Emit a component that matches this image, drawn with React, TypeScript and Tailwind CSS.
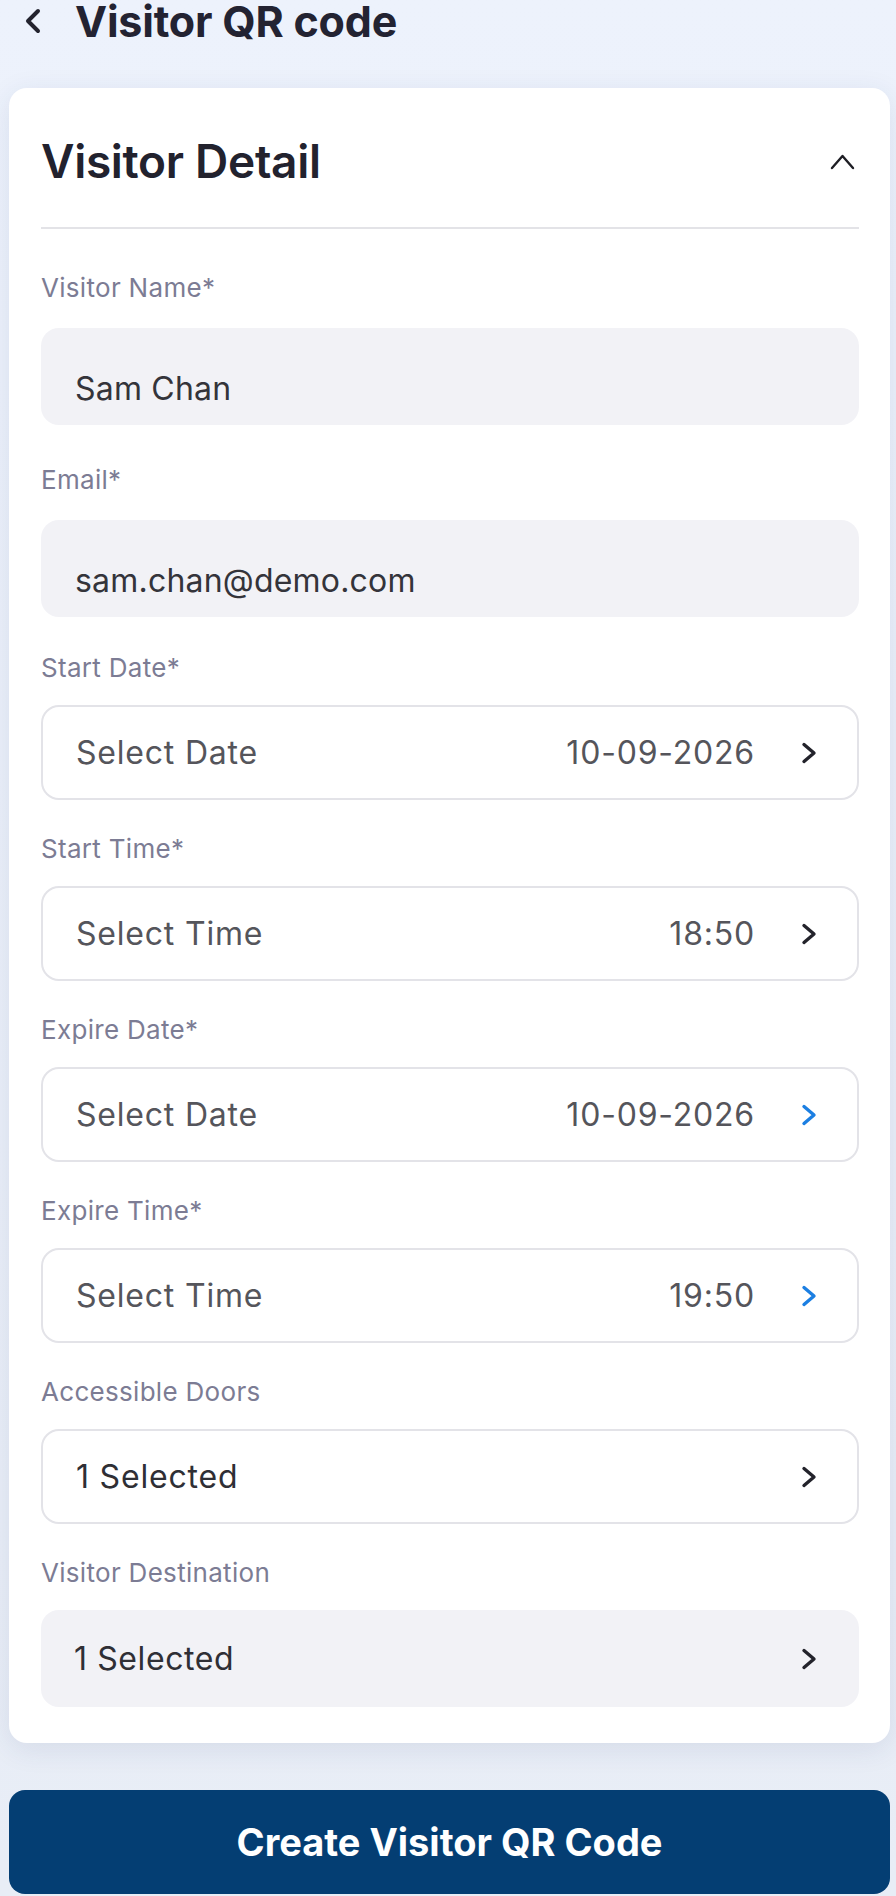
import React from "react"

type Chevron = "dark" | "blue"

function ChevronRight({ tone = "dark" }: { tone?: Chevron }) {
  return (
    <svg
      width="16"
      height="24"
      viewBox="0 0 16 24"
      fill="none"
      className={tone === "blue" ? "text-[#1c7fe2]" : "text-[#23232b]"}
    >
      <path
        d="M3 3.5 L13 12 L3 20.5"
        stroke="currentColor"
        strokeWidth="3.4"
        strokeLinecap="round"
        strokeLinejoin="round"
      />
    </svg>
  )
}

function Label({ children }: { children: React.ReactNode }) {
  return <p className="text-[26px] leading-[28px] tracking-[0.3px] text-[#7c7c94]">{children}</p>
}

// filled, read-only text input (text sits a little low, like the app)
function FilledField({ label, value, first }: { label: string; value: string; first?: boolean }) {
  return (
    <div className={first ? "mt-[45px]" : "mt-[41px]"}>
      <Label>{label}</Label>
      <div className="mt-[26px] flex h-[97px] items-center rounded-[18px] bg-[#f2f2f6] px-[34px] pt-[24px]">
        <span className="text-[32px] leading-none tracking-[0.2px] text-[#34343a]">{value}</span>
      </div>
    </div>
  )
}

// bordered picker row
function PickerField({
  label,
  placeholder,
  value,
  tone = "dark",
  dark,
  top = "mt-[35px]",
}: {
  label: string
  placeholder: string
  value?: string
  tone?: Chevron
  dark?: boolean
  top?: string
}) {
  return (
    <div className={top}>
      <Label>{label}</Label>
      <div className="mt-[23px] flex h-[95px] items-center rounded-[18px] border-2 border-[#e3e3e8] bg-white pl-[33px] pr-[40px]">
        <span
          className={`flex-1 text-[32px] leading-none tracking-[0.8px] ${dark ? "text-[#2f2f35]" : "text-[#55555b]"}`}
        >
          {placeholder}
        </span>
        {value && (
          <span className="mr-[46px] text-[32px] leading-none tracking-[0.8px] text-[#55555b]">{value}</span>
        )}
        <ChevronRight tone={tone} />
      </div>
    </div>
  )
}

export default function App() {
  return (
    <div
      className="min-h-[1896px] w-[896px] overflow-hidden bg-gradient-to-b from-[#edf2fc] to-[#e8edf6]"
      style={{ fontFamily: "Inter, 'Noto Sans', 'Liberation Sans', sans-serif" }}
    >
      {/* Top bar */}
      <div className="flex h-[42px] items-center">
        <div className="ml-[23px] flex w-[52px] items-center">
          <svg width="20" height="28" viewBox="0 0 20 28" fill="none" className="text-[#23232e]">
            <path
              d="M15 4 L5 14 L15 24"
              stroke="currentColor"
              strokeWidth="4"
              strokeLinecap="round"
              strokeLinejoin="round"
            />
          </svg>
        </div>
        <h1 className="text-[43px] font-bold leading-[42px] tracking-[-0.2px] text-[#232332]">Visitor QR code</h1>
      </div>

      {/* Card */}
      <div className="ml-[9px] mr-[6px] mt-[46px] rounded-[18px] bg-white pb-[36px] pl-[32px] pr-[31px] pt-[47px] shadow-[0_6px_28px_rgba(40,60,110,0.10)]">
        <div className="flex h-[52px] items-center justify-between">
          <h2 className="text-[46px] font-semibold leading-[52px] tracking-[-0.3px] text-[#22222e]">Visitor Detail</h2>
          <svg width="25" height="17" viewBox="0 0 25 17" fill="none" className="mr-[4px] text-[#1e1e24]">
            <path
              d="M2 15 L12.5 3 L23 15"
              stroke="currentColor"
              strokeWidth="2.4"
              strokeLinecap="round"
              strokeLinejoin="round"
            />
          </svg>
        </div>
        <div className="mt-[40px] h-[2px] bg-[#e3e3e7]" />

        <FilledField label="Visitor Name*" value="Sam Chan" first />
        <FilledField label="Email*" value="sam.chan@demo.com" />

        <PickerField label="Start Date*" placeholder="Select Date" value="10-09-2026" top="mt-[37px]" />
        <PickerField label="Start Time*" placeholder="Select Time" value="18:50" />
        <PickerField label="Expire Date*" placeholder="Select Date" value="10-09-2026" tone="blue" />
        <PickerField label="Expire Time*" placeholder="Select Time" value="19:50" tone="blue" />
        <PickerField label="Accessible Doors" placeholder="1 Selected" dark />

        <div className="mt-[35px]">
          <Label>Visitor Destination</Label>
          <div className="mt-[23px] flex h-[97px] items-center rounded-[18px] bg-[#f2f2f6] pl-[33px] pr-[42px]">
            <span className="flex-1 text-[32px] leading-none tracking-[0.6px] text-[#2f2f35]">1 Selected</span>
            <ChevronRight />
          </div>
        </div>
      </div>

      {/* Submit */}
      <button className="ml-[9px] mt-[47px] flex h-[104px] w-[881px] items-center justify-center rounded-[16px] bg-[#043e73]">
        <span className="text-[38px] font-bold leading-none text-white">Create Visitor QR Code</span>
      </button>
    </div>
  )
}
